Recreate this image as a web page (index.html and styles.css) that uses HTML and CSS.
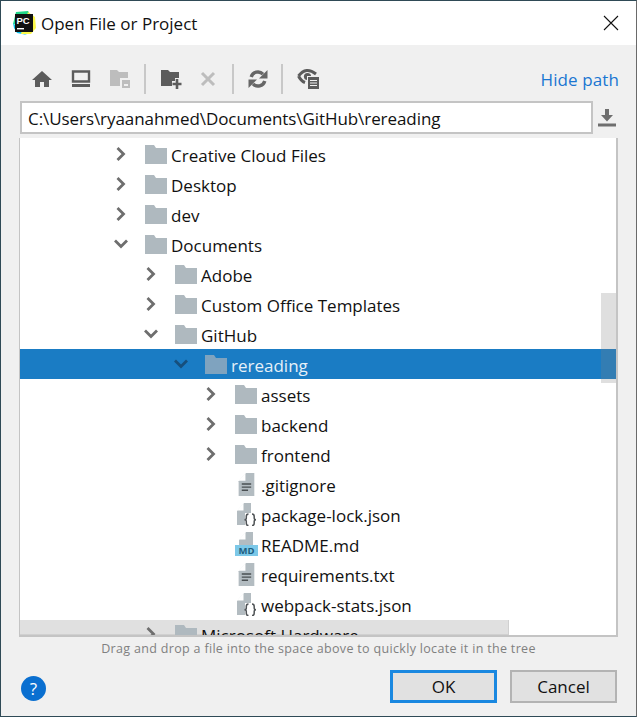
FILE: index.html
```html
<!DOCTYPE html>
<html lang="en">
<head>
  <meta charset="UTF-8" />
  <title>Open File or Project</title>
  <link rel="stylesheet" href="styles.css">
</head>
<body>
  <svg class="defs" width="0" height="0">
    <symbol id="chev-right" viewBox="0 0 12 16"><path d="M2.5 2 L8.5 8 L2.5 14" fill="none" stroke="#6e6e6e" stroke-width="2.8"/></symbol>
    <symbol id="chev-down" viewBox="0 0 16 12"><path d="M2 2.5 L8 8.5 L14 2.5" fill="none" stroke="#6e6e6e" stroke-width="2.8"/></symbol>
    <symbol id="chev-down-sel" viewBox="0 0 16 12"><path d="M2 2.5 L8 8.5 L14 2.5" fill="none" stroke="#164f7c" stroke-width="2.8"/></symbol>
    <symbol id="folder" viewBox="0 0 22 19"><path d="M0 0 H9 L11 3 H22 V19 H0 Z" fill="#afb9bf"/></symbol>
    <symbol id="folder-sel" viewBox="0 0 22 19"><path d="M0 0 H9 L11 3 H22 V19 H0 Z" fill="#7fa3bf"/></symbol>
    <symbol id="text-file" viewBox="0 0 16 22"><path d="M0 8 L7 0 H15 V22 H0 Z" fill="#b3bcc1"/><path d="M0 7.5 L6.5 0 V7.5 Z" fill="#fff"/><path d="M3 10.5 H12 M3 13.5 H12 M3 16.5 H9" stroke="#4a4f52" stroke-width="1.4"/></symbol>
    <symbol id="json-file" viewBox="0 0 20 23"><path d="M0 8 L7 0 H14 V10 H8 V22 H0 Z" fill="#b3bcc1"/><path d="M0 7.5 L6.5 0 V7.5 Z" fill="#fff"/><path d="M11.5 11 Q9.3 11 9.3 13.5 V15 Q9.3 16.8 7.5 16.8 Q9.3 16.8 9.3 18.6 V20.2 Q9.3 22.6 11.5 22.6 M15 11 Q17.2 11 17.2 13.5 V15 Q17.2 16.8 19 16.8 Q17.2 16.8 17.2 18.6 V20.2 Q17.2 22.6 15 22.6" fill="none" stroke="#4f5356" stroke-width="1.5"/></symbol>
  </svg>

  <div class="window">
    <div class="titlebar">
      <svg class="app-icon" width="23" height="24" viewBox="0 0 23 24">
        <path d="M3 1 L15 0 L19 6 L12 16 L0 13 Z" fill="#21d789"/>
        <path d="M0 12 L8 21 L14 24 L4 22 L1 17 Z" fill="#07c3f2"/>
        <path d="M15 1 L22 6 L23 17 L18 23 L8 23 Z" fill="#fcf84a"/>
        <rect x="2" y="3" width="18" height="18" fill="#111"/>
        <text x="3.5" y="12.5" class="app-letters">PC</text>
        <rect x="4" y="17" width="7" height="1.4" fill="#fff"/>
      </svg>
      <span class="title">Open File or Project</span>
      <svg class="close" width="16" height="16" viewBox="0 0 16 16"><path d="M1 1 L15 15 M15 1 L1 15" stroke="#111" stroke-width="1.1"/></svg>
    </div>

    <div class="content">
      <div class="toolbar">
        <!-- home -->
        <svg class="tool" width="22" height="20" viewBox="0 0 22 20"><path d="M11 2 L21 11 H18 V18 H13 V13 H9 V18 H4 V11 H1 Z" fill="#5c5c5c"/></svg>
        <!-- desktop -->
        <svg class="tool" width="20" height="18" viewBox="0 0 20 18"><path d="M2 1.5 H18 V11.5 H2 Z" fill="none" stroke="#5c5c5c" stroke-width="2.4"/><rect x="1" y="14" width="18" height="3" fill="#5c5c5c"/></svg>
        <!-- module folder -->
        <svg class="tool" width="22" height="20" viewBox="0 0 22 20"><path d="M1 1 H8 L10 3 H19 V9 H11 V17 H1 Z" fill="#bdbdbd"/><path d="M13 11 H21 V19 H13 Z" fill="#bdbdbd"/><rect x="15" y="15" width="4" height="2" fill="#f0f0f0"/></svg>
        <span class="sep"></span>
        <!-- new folder -->
        <svg class="tool" width="22" height="20" viewBox="0 0 22 20"><path d="M1 1 H8 L10 3 H19 V9 H15 V12 H12 V17 H1 Z" fill="#5c5c5c"/><path d="M17 10 V20 M12.5 15 H21.5" stroke="#5c5c5c" stroke-width="2.6"/></svg>
        <!-- delete -->
        <svg class="tool tool-wide" width="16" height="16" viewBox="0 0 16 16"><path d="M2 2 L14 14 M14 2 L2 14" stroke="#bdbdbd" stroke-width="3"/></svg>
        <span class="sep"></span>
        <!-- refresh -->
        <svg class="tool" width="20" height="20" viewBox="0 0 20 20"><path d="M3.2 8 A7 7 0 0 1 15 5.2" fill="none" stroke="#666" stroke-width="3.4"/><path d="M19.5 1 V9.5 H11 Z" fill="#666"/><path d="M16.8 12 A7 7 0 0 1 5 14.8" fill="none" stroke="#666" stroke-width="3.4"/><path d="M0.5 19 V10.5 H9 Z" fill="#666"/></svg>
        <span class="sep"></span>
        <!-- show hidden -->
        <svg class="tool" width="22" height="21" viewBox="0 0 22 21"><path d="M1.5 8 Q9 -2 19 6 M1.5 8 Q4 13 8 14.5" fill="none" stroke="#5c5c5c" stroke-width="3"/><circle cx="10.5" cy="8.5" r="3.6" fill="#5c5c5c"/><rect x="10" y="8" width="12" height="13" fill="#f0f0f0"/><rect x="11" y="9" width="11" height="12" fill="#5c5c5c"/><path d="M13 12.5 H20 M13 15 H20 M13 17.5 H20" stroke="#f0f0f0" stroke-width="1.2"/></svg>
        <span class="hide-path">Hide path</span>
      </div>

      <div class="path-row">
        <div class="path-field">C:\Users\ryaanahmed\Documents\GitHub\rereading</div>
        <svg class="download" width="18" height="18" viewBox="0 0 18 18"><path d="M7 0 H11 V6 H15 L9 12.5 L3 6 H7 Z" fill="#6e6e6e"/><rect x="0" y="14.5" width="18" height="3" fill="#6e6e6e"/></svg>
      </div>

      <div class="tree">
        <div class="rows">
          <div class="row d0"><svg class="chev"><use href="#chev-right"/></svg><svg class="ficon"><use href="#folder"/></svg><span>Creative Cloud Files</span></div>
          <div class="row d0"><svg class="chev"><use href="#chev-right"/></svg><svg class="ficon"><use href="#folder"/></svg><span>Desktop</span></div>
          <div class="row d0"><svg class="chev"><use href="#chev-right"/></svg><svg class="ficon"><use href="#folder"/></svg><span>dev</span></div>
          <div class="row d0"><svg class="chev"><use href="#chev-down"/></svg><svg class="ficon"><use href="#folder"/></svg><span>Documents</span></div>
          <div class="row d1"><svg class="chev"><use href="#chev-right"/></svg><svg class="ficon"><use href="#folder"/></svg><span>Adobe</span></div>
          <div class="row d1"><svg class="chev"><use href="#chev-right"/></svg><svg class="ficon"><use href="#folder"/></svg><span>Custom Office Templates</span></div>
          <div class="row d1"><svg class="chev"><use href="#chev-down"/></svg><svg class="ficon"><use href="#folder"/></svg><span>GitHub</span></div>
          <div class="row d2 selected"><svg class="chev"><use href="#chev-down-sel"/></svg><svg class="ficon"><use href="#folder-sel"/></svg><span>rereading</span></div>
          <div class="row d3"><svg class="chev"><use href="#chev-right"/></svg><svg class="ficon"><use href="#folder"/></svg><span>assets</span></div>
          <div class="row d3"><svg class="chev"><use href="#chev-right"/></svg><svg class="ficon"><use href="#folder"/></svg><span>backend</span></div>
          <div class="row d3"><svg class="chev"><use href="#chev-right"/></svg><svg class="ficon"><use href="#folder"/></svg><span>frontend</span></div>
          <div class="row d3"><span class="chev"></span><svg class="ficon file"><use href="#text-file"/></svg><span>.gitignore</span></div>
          <div class="row d3"><span class="chev"></span><svg class="ficon file"><use href="#json-file"/></svg><span>package-lock.json</span></div>
          <div class="row d3">
            <span class="chev"></span>
            <span class="md-icon"><svg class="md-page" width="16" height="13" viewBox="0 0 16 13"><path d="M1 8 L8 0 H15 V13 H1 Z" fill="#b3bcc1"/><path d="M1 7.5 L7.5 0 V7.5 Z" fill="#fff"/></svg><span class="md-badge">MD</span></span>
            <span>README.md</span>
          </div>
          <div class="row d3"><span class="chev"></span><svg class="ficon file"><use href="#text-file"/></svg><span>requirements.txt</span></div>
          <div class="row d3"><span class="chev"></span><svg class="ficon file"><use href="#json-file"/></svg><span>webpack-stats.json</span></div>
          <div class="row d1"><svg class="chev"><use href="#chev-right"/></svg><svg class="ficon"><use href="#folder"/></svg><span>Microsoft Hardware</span></div>
        </div>
        <div class="vscroll"></div>
        <div class="hscroll"></div>
      </div>

      <div class="hint">Drag and drop a file into the space above to quickly locate it in the tree</div>

      <div class="footer">
        <span class="help">?</span>
        <button class="btn default">OK</button>
        <button class="btn">Cancel</button>
      </div>
    </div>
  </div>
</body>
</html>
```

FILE: styles.css
```css
* {
  margin: 0;
  padding: 0;
  box-sizing: border-box;
}
body {
  font-family: 'Open Sans', 'Liberation Sans', sans-serif;
  color: #111;
  background: #f0f0f0;
  overflow: hidden;
}
.defs {
  display: block;
  height: 0;
}
.window {
  width: 637px;
  height: 717px;
  display: flex;
  flex-direction: column;
  border: 1px solid #2f4a56;
  border-right-color: #6a6a6a;
}
.titlebar {
  height: 44px;
  flex: none;
  background: #fff;
  display: flex;
  align-items: center;
  padding: 0 17px 0 12px;
}
.app-icon {
  margin-right: 5px;
  flex: none;
}
.app-letters {
  font-family: 'Liberation Sans', sans-serif;
  font-size: 9.5px;
  font-weight: bold;
  fill: #fff;
}
.title {
  font-size: 17px;
  flex: 1;
}
.content {
  flex: 1;
  display: flex;
  flex-direction: column;
  padding: 0 18px 0 18px;
}
.toolbar {
  height: 56px;
  flex: none;
  display: flex;
  align-items: center;
  position: relative;
  padding-top: 11px;
  padding-left: 12px;
}
.tool {
  flex: none;
  margin-right: 18px;
}
.tool-wide {
  margin-right: 21px;
}
.sep {
  width: 2px;
  height: 30px;
  background: #c8c8c8;
  margin-right: 14px;
  margin-left: -5px;
}
.hide-path {
  margin-left: auto;
  color: #1a76d2;
  font-size: 17px;
  letter-spacing: 0.1px;
  margin-right: -1px;
  padding-top: 2px;
}
.path-row {
  display: flex;
  align-items: center;
  height: 33px;
  flex: none;
  margin-left: 1px;
}
.path-field {
  width: 573px;
  height: 33px;
  border: 2px solid #c4c4c4;
  background: #fff;
  font-size: 17px;
  letter-spacing: -0.07px;
  line-height: 31px;
  padding-left: 6px;
  white-space: nowrap;
}
.download {
  margin-left: 5px;
  flex: none;
}
.tree {
  position: relative;
  margin-top: 4px;
  height: 499px;
  flex: none;
  background: #fff;
  border: 2px solid #c4c4c4;
  border-top: none;
  border-left: 1px solid #c4c4c4;
  overflow: hidden;
}
.rows {
  position: relative;
  z-index: 1;
  padding-top: 1px;
}
.row {
  height: 30px;
  display: flex;
  align-items: center;
  font-size: 17px;
  white-space: nowrap;
}
.row > span:last-child {
  padding-top: 2px;
}
.d0 { padding-left: 95px; }
.d1 { padding-left: 125px; }
.d2 { padding-left: 155px; }
.d3 { padding-left: 185px; }
.row.selected {
  background: #1a7cc4;
  color: #e6f0f8;
}
.chev {
  width: 16px;
  height: 16px;
  flex: none;
  margin-left: -2px;
  margin-right: 16px;
}
.ficon {
  width: 22px;
  height: 19px;
  margin-right: 4px;
  flex: none;
}
.ficon.file {
  height: 23px;
  width: 20px;
  margin-left: 2px;
  margin-right: 4px;
}
.md-icon {
  position: relative;
  width: 23px;
  height: 24px;
  flex: none;
  margin-right: 3px;
}
.md-page {
  position: absolute;
  top: 0;
  left: 3px;
}
.md-badge {
  position: absolute;
  left: 0;
  bottom: 0;
  width: 23px;
  height: 11px;
  background: #7cc8e8;
  color: #1f5f80;
  font-size: 9.5px;
  font-weight: bold;
  line-height: 11px;
  text-align: center;
}
.vscroll {
  position: absolute;
  z-index: 2;
  right: 0;
  top: 155px;
  width: 15px;
  height: 90px;
  background: rgba(128, 128, 128, 0.25);
}
.hscroll {
  position: absolute;
  left: 0;
  bottom: 0;
  width: 489px;
  height: 15px;
  background: #e0e0e0;
  border-right: 1px solid #d0d0d0;
  border-bottom: 1px solid #d0d0d0;
}
.hint {
  text-align: center;
  color: #808080;
  font-size: 12.5px;
  margin-top: 3px;
  letter-spacing: 0.32px;
  height: 20px;
  line-height: 18px;
  white-space: nowrap;
}
.footer {
  display: flex;
  align-items: center;
  gap: 13px;
  margin-top: 10px;
  margin-right: 1px;
}
.help {
  width: 25px;
  height: 25px;
  border-radius: 50%;
  background: #0a6fd0;
  color: #fff;
  font-size: 17px;
  line-height: 25px;
  text-align: center;
  margin-left: 2px;
  margin-top: 4px;
  margin-right: auto;
}
.btn {
  width: 107px;
  height: 33px;
  font-family: inherit;
  font-size: 17px;
  color: #111;
  background: #e1e1e1;
  border: 2px solid #b3b3b3;
}
.btn.default {
  border: 3px solid #1a88e0;
}
```
